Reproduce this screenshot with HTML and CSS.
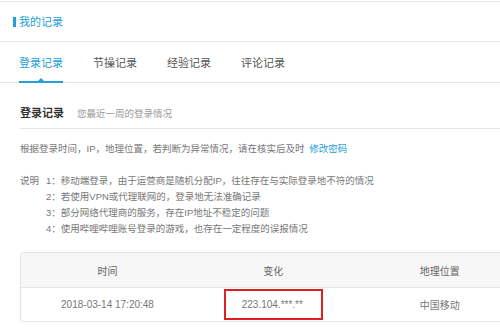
FILE: index.html
```html
<!DOCTYPE html>
<html lang="zh-CN">
<head>
  <meta charset="UTF-8" />
  <meta name="viewport" content="width=device-width, initial-scale=1.0"/>
  <title>我的记录</title>
  <link rel="stylesheet" href="styles.css">
</head>
<body>

  <div class="panel-head">
    <h1 class="panel-title">我的记录</h1>
  </div>

  <nav class="tabs">
    <a class="tab active" href="#">登录记录</a>
    <a class="tab" href="#">节操记录</a>
    <a class="tab" href="#">经验记录</a>
    <a class="tab" href="#">评论记录</a>
  </nav>

  <main class="content">
    <div class="section-head">
      <h2>登录记录</h2>
      <span class="section-desc">您最近一周的登录情况</span>
    </div>

    <p class="tip">根据登录时间，IP，地理位置，若判断为异常情况，请在核实后及时 <a href="#">修改密码</a></p>

    <!-- 说明 -->
    <div class="notes">
      <span class="notes-label">说明</span>
      <ol class="notes-list">
        <li>1：移动端登录，由于运营商是随机分配IP，往往存在与实际登录地不符的情况</li>
        <li>2：若使用VPN或代理联网的，登录地无法准确记录</li>
        <li>3：部分网络代理商的服务，存在IP地址不稳定的问题</li>
        <li>4：使用哔哩哔哩账号登录的游戏，也存在一定程度的误报情况</li>
      </ol>
    </div>

    <table class="log-table">
      <thead>
        <tr>
          <th class="col-time">时间</th>
          <th class="col-ip">变化</th>
          <th class="col-loc">地理位置</th>
        </tr>
      </thead>
      <tbody>
        <tr>
          <td>2018-03-14 17:20:48</td>
          <td><span class="mark">223.104.***.**</span></td>
          <td>中国移动</td>
        </tr>
      </tbody>
    </table>
  </main>

</body>
</html>
```

FILE: styles.css
```css
html, body {
  overflow: hidden;
}
body {
  margin: 0;
  font-family: "Liberation Sans", "Noto Sans CJK SC", sans-serif;
  background-color: #ffffff;
  color: #666;
}

/* Header */
.panel-head {
  margin-top: 1px;
  border-top: 1px solid #e8e8e8;
  border-bottom: 1px solid #e5e5e5;
  height: 39px;
  display: flex;
  align-items: center;
}
.panel-title {
  margin: 0 0 0 13px;
  padding-left: 3px;
  border-left: 3px solid #23a0d8;
  font-size: 11px;
  font-weight: normal;
  line-height: 10px;
  color: #23a0d8;
}

/* Tabs */
.tabs {
  display: flex;
  gap: 30px;
  padding-left: 19px;
  height: 40px;
  border-bottom: 1px solid #e5e5e5;
}
.tab {
  position: relative;
  display: flex;
  align-items: center;
  font-size: 11px;
  color: #555;
  text-decoration: none;
}
.tab.active {
  color: #23a0d8;
  border-bottom: 2px solid #23a0d8;
  margin-bottom: -1px;
}
.tab.active::after {
  content: "";
  position: absolute;
  left: 50%;
  bottom: 0;
  margin-left: -3px;
  border: 3px solid transparent;
  border-bottom-color: #23a0d8;
}

/* Content */
.content {
  padding-left: 20px;
  overflow: hidden;
}
.section-head {
  display: flex;
  align-items: baseline;
  gap: 13px;
  margin-top: 21px;
  padding-bottom: 8px;
  border-bottom: 1px solid #e5e5e5;
}
.section-head h2 {
  margin: 0;
  font-size: 11px;
  color: #333;
}
.section-desc {
  font-size: 9.5px;
  color: #999;
}
.tip {
  margin: 12px 0 0;
  font-size: 9.5px;
  color: #777;
}
.tip a {
  color: #23a0d8;
  text-decoration: none;
  margin-left: 2px;
}

.notes {
  display: flex;
  gap: 7px;
  margin-top: 18px;
  font-size: 9.5px;
  line-height: 16px;
  color: #777;
}
.notes-list {
  margin: 0;
  padding: 0;
  list-style: none;
}

/* Table */
.log-table {
  margin-top: 15px;
  border-collapse: separate;
  border-spacing: 0;
  border: 1px solid #e5e5e5;
  border-radius: 3px;
  width: 508px;
  font-size: 10px;
  color: #777;
}
.log-table th {
  background-color: #f7f7f7;
  font-weight: normal;
  height: 32px;
  border-bottom: 1px solid #e5e5e5;
  color: #666;
}
.log-table td {
  height: 33px;
  text-align: center;
  padding: 0;
}
.col-time { width: 174px; }
.col-ip { width: 158px; }
.col-loc { width: 176px; }
.mark {
  display: inline-block;
  border: 2px solid #e02020;
  padding: 0 18px 0 16px;
  line-height: 27px;
}
```
